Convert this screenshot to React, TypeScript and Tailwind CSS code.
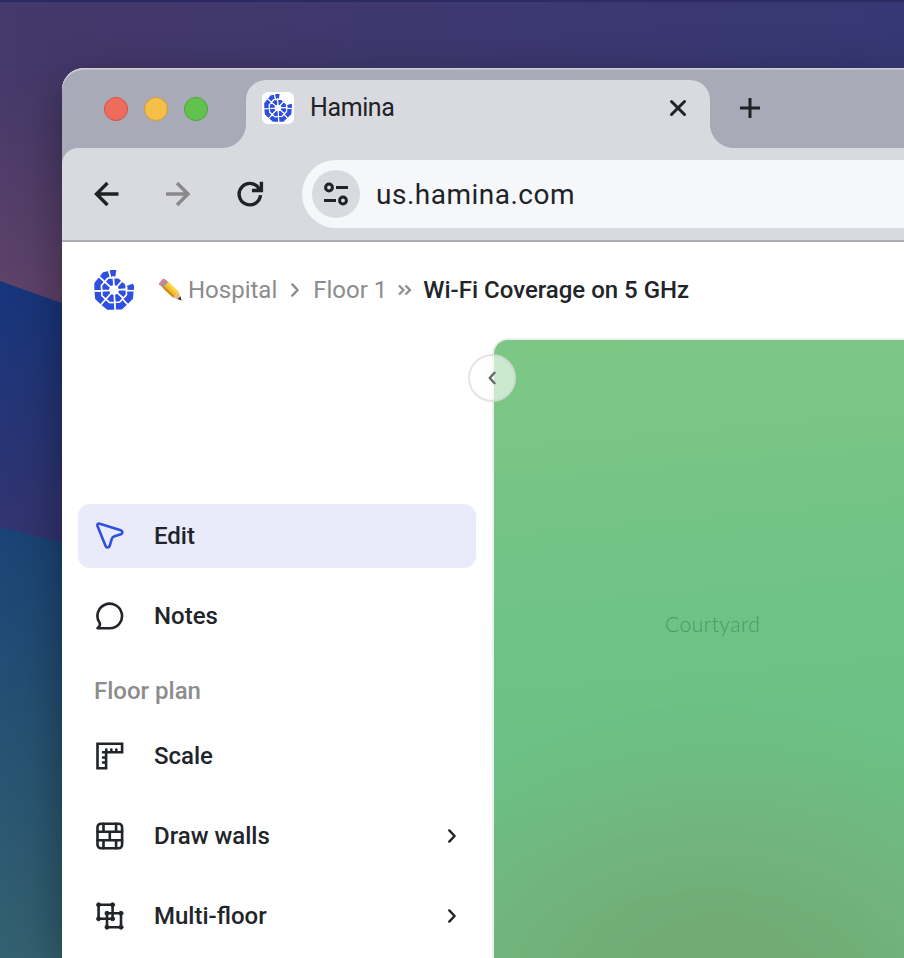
import React from "react";

function polar(r: number, deg: number) {
  const a = ((deg - 90) * Math.PI) / 180;
  return `${(20 + r * Math.cos(a)).toFixed(2)},${(20 + r * Math.sin(a)).toFixed(2)}`;
}

const outerCuts = [69, 92, 137, 177, 222, 267, 312, 345, 369];
const innerCuts = [-3, 42, 87, 132, 177, 222, 267, 312, 357];

function Logo({ size }: { size: number }) {
  return (
    <svg width={size} height={size} viewBox="0 0 40 40" className="shrink-0">
      <g fill="#2f4fe0" stroke="#fff" strokeWidth="1.55">
        {outerCuts.slice(0, -1).map((a, i) => {
          const b = outerCuts[i + 1];
          const mid = (a + b) / 2;
          return <polygon key={a} points={[polar(12.2, a), polar(20.4, a), polar(21.7, mid), polar(20.4, b), polar(12.2, b), polar(13.2, mid)].join(" ")} />;
        })}
        {innerCuts.slice(0, -1).map((a, i) => {
          const b = innerCuts[i + 1];
          const mid = (a + b) / 2;
          return <polygon key={a} points={[polar(4.4, a), polar(12.2, a), polar(13.3, mid), polar(12.2, b), polar(4.4, b)].join(" ")} />;
        })}
      </g>
    </svg>
  );
}

function Pencil() {
  return (
    <svg width="24" height="24" viewBox="0 0 24 24" className="shrink-0">
      <path d="M1 5.200 4.200 1.500Q5.500.300 7 1.300L9.300 3.300 3.500 8.600 1.200 6.700Q.500 6 1 5.200Z" fill="#d98288" />
      <path d="m2.900 8 5.600-5.600 2.600 2.300-5.500 5.800Z" fill="#8f9ca4" />
      <path d="m4.600 9.800 5.900-5.900 10.300 10.200-5.900 5.500Z" fill="#f4bb2c" />
      <path d="m4.600 9.800 1.700-1.700 10.200 9.800-1.600 1.700Z" fill="#cf8a18" />
      <path d="m8.500 5.900 2-2 10.300 10.200-1.900 1.800Z" fill="#fbd549" />
      <path d="m14.900 19.500 5.800-5.400 2.800 8.300Z" fill="#e5bb82" />
      <path d="m19.500 21.100 3-2.700 1.100 4.200Z" fill="#39312f" />
    </svg>
  );
}

function Chevron({ className = "", flip = false }: { className?: string; flip?: boolean }) {
  return (
    <svg width="8" height="14" viewBox="0 0 8 14" className={className} fill="none" stroke="currentColor" strokeWidth="2.4" strokeLinecap="round" strokeLinejoin="round">
      <path d={flip ? "M6.500 1.800 1.700 7l4.800 5.200" : "m1.300 1.400 5.300 5.600-5.300 5.600"} />
    </svg>
  );
}

const icons: Record<string, React.ReactNode> = {
  edit: <path d="M2.700 5.100C2.100 3.200 3.300 2.200 5 2.700l20.900 6.600c2.200.8 2.200 3.200.2 3.900l-6.400 2c-1.500.5-2.300 1.300-2.700 2.700l-2.100 6.900c-.8 2.300-3.400 2.300-4.200 0Z" />,
  notes: <path d="M2.700 27.300H15A12.300 12.300 0 1 0 4.900 22.100Q6 24.600 2.700 27.300Z" />,
  scale: (
    <>
      <path d="M2.700 2.700h24.600v8.600h-16v16H2.700Z" strokeLinejoin="miter" />
      <path d="M11.500 8.500v2M16.500 8.500v2M21.500 8.500v2M8.200 11.300h3M8.200 16.500h2M8.200 21.500h2" />
    </>
  ),
  walls: (
    <>
      <rect x="2.700" y="2.700" width="24.600" height="24.600" rx="3.500" />
      <path d="M2.700 10.800h24.600M2.700 19.200h24.600M8.700 2.700v8.100m12.600-8.100v8.100M15 10.800v8.400M8.700 19.200v8.100m12.600-8.100v8.100" />
    </>
  ),
  floors: (
    <>
      <path d="M3.800 3.800h14v14h-14ZM12.200 12.200h14v14h-14Z" />
      <g fill="currentColor" strokeWidth="1">
        <circle cx="3.800" cy="3.800" r="2" />
        <circle cx="17.800" cy="3.800" r="2" />
        <circle cx="3.800" cy="17.800" r="2" />
        <circle cx="17.800" cy="17.800" r="2" />
        <circle cx="12.200" cy="12.200" r="2" />
        <circle cx="26.200" cy="12.200" r="2" />
        <circle cx="12.200" cy="26.200" r="2" />
        <circle cx="26.200" cy="26.200" r="2" />
      </g>
    </>
  ),
};

function Item({ icon, label, active = false, more = false }: { icon: string; label: string; active?: boolean; more?: boolean }) {
  return (
    <div className={`flex h-16 w-[398px] shrink-0 items-center rounded-xl pr-5 pl-[17px] ${active ? "bg-[#e9ebfb]" : ""}`}>
      <svg width="30" height="30" viewBox="0.2 0 30 30" fill="none" stroke="currentColor" strokeWidth="2.600" strokeLinejoin="round" strokeLinecap="round" className={active ? "text-[#2f4fe0]" : "text-[#212529]"}>
        {icons[icon]}
      </svg>
      <span className="ml-[29px] flex-1 text-2xl font-medium">{label}</span>
      {more && <Chevron />}
    </div>
  );
}

function Wallpaper() {
  return (
    <svg className="absolute inset-0" width="904" height="958" viewBox="0 0 904 958">
      <defs>
        <linearGradient id="top" x1="0" y1="0" x2="1" y2="0">
          <stop offset="0" stopColor="#45386a" />
          <stop offset="1" stopColor="#363875" />
        </linearGradient>
        <linearGradient id="left" x1="0" y1="0" x2="0" y2="1">
          <stop offset="0" stopColor="#5f4468" stopOpacity="0" />
          <stop offset="1" stopColor="#62446a" />
        </linearGradient>
        <linearGradient id="mid" x1="0" y1="0" x2="0" y2="1">
          <stop offset="0" stopColor="#17367d" />
          <stop offset="1" stopColor="#35346f" />
        </linearGradient>
        <linearGradient id="low" x1="0" y1="0" x2="0" y2="1">
          <stop offset="0" stopColor="#1a4476" />
          <stop offset="1" stopColor="#346170" />
        </linearGradient>
      </defs>
      <path d="M0 0h904v315H0Z" fill="url(#top)" />
      <path d="M0 0h904v2H0Z" fill="#2b2a62" />
      <path d="M0 68h90v250H0Z" fill="url(#left)" />
      <path d="M0 281 90 313v240H0Z" fill="url(#mid)" />
      <path d="m0 527 90 22v409H0Z" fill="url(#low)" />
    </svg>
  );
}

function TabStrip() {
  return (
    <div className="flex h-20 shrink-0 rounded-tl-[22px] bg-[#a8aab7] pt-3 shadow-[inset_0_1.500px_0_#cfd0d8]">
      <div className="flex w-[160px] gap-4 pt-[17px] pl-[42px]">
        <i className="size-6 rounded-full border border-[#d5513f] bg-[#ed6c5c]" />
        <i className="size-6 rounded-full border border-[#d69b31] bg-[#f5bf48]" />
        <i className="size-6 rounded-full border border-[#4ba739] bg-[#61c34e]" />
      </div>
      <div className="size-6 self-end bg-[radial-gradient(circle_at_0_0,transparent_23.5px,#d9dadf_24.5px)]" />
      <div className="flex w-[464px] items-start rounded-t-[20px] bg-[#d9dadf] pt-3 pr-[22px] pl-4">
        <div className="flex size-8 items-center justify-center rounded-md bg-white">
          <Logo size={28} />
        </div>
        <span className="ml-4 flex-1 text-[25px] leading-[32px] tracking-[-0.4px] text-[#212226]">Hamina</span>
        <svg width="20" height="32" viewBox="0 0 20 32" stroke="#202226" strokeWidth="3" strokeLinecap="round">
          <path d="m3.500 9.500 13 13M16.500 9.500l-13 13" />
        </svg>
      </div>
      <div className="size-6 self-end bg-[radial-gradient(circle_at_100%_0,transparent_23.5px,#d9dadf_24.5px)]" />
      <svg className="mt-[18px] ml-[5px]" width="22" height="22" viewBox="0 0 22 22" stroke="#202226" strokeWidth="3">
        <path d="M11 0v20M1 10h20" />
      </svg>
    </div>
  );
}

function Toolbar() {
  return (
    <div className="bg-[#a8aab7]">
      <div className="flex h-[94px] items-start rounded-tl-2xl border-b-2 border-[#adadb3] bg-[#d9dadf] pt-3">
        <svg width="240" height="68" viewBox="62 160 240 68" fill="none" stroke="#202226" strokeWidth="3.400">
          <path d="M118.500 194H96.500M107.500 183 96.500 194l11 11" />
          <path d="M166 194h22M177 183 188 194l-11 11" stroke="#89898d" />
          <path d="M260.500 195.200A10.700 10.700 0 1 1 259.500 189.500" />
          <path d="M252 190.500h9.400v-8.700" />
        </svg>
        <div className="flex h-[68px] flex-1 items-center rounded-l-full bg-[#f6f7fa] pl-[10px]">
          <div className="flex size-12 items-center justify-center rounded-full bg-[#d9dadf]">
            <svg width="26" height="26" viewBox="0 0 26 26" fill="none" stroke="#202226" strokeWidth="3">
              <circle cx="6" cy="6.500" r="3.400" />
              <path d="M13 6.500h12M1 19.500h12" />
              <circle cx="20" cy="19.500" r="3.400" />
            </svg>
          </div>
          <span className="relative top-px ml-4 text-[28px] tracking-[0.500px] text-[#202226]">us.hamina.com</span>
        </div>
      </div>
    </div>
  );
}

function Breadcrumbs() {
  return (
    <header className="flex h-24 shrink-0 items-center pl-8 text-2xl text-[#8c8c8c]">
      <Logo size={40} />
      <div className="ml-6 flex items-center">
        <Pencil />
        <span className="ml-[6px]">Hospital</span>
        <Chevron className="mx-[14px]" />
        <span>Floor 1</span>
        <svg className="mr-[11px] ml-[11px]" width="14" height="12" viewBox="0 0 14 12" fill="none" stroke="currentColor" strokeWidth="2.200">
          <path d="m1 1.500 4.500 4.500L1 10.500M7.500 1.500 12 6l-4.500 4.500" />
        </svg>
        <span className="font-medium text-[#212529]">Wi-Fi Coverage on 5 GHz</span>
      </div>
    </header>
  );
}

const bands = [
  [330, 285],
  [300, 238],
  [270, 200],
  [235, 165],
  [200, 130],
  [165, 100],
];

function Coverage() {
  return (
    <main className="relative flex-1">
      <div className="relative h-full overflow-hidden rounded-tl-2xl border-t-2 border-l-2 border-[#eeeeef] bg-[linear-gradient(175deg,#7cc784_0%,#7ac686_15%,#72c386_35%,#6dc286_52%,#6cbf85_75%,#6fbc82_100%)]">
        <svg className="absolute inset-0" width="410" height="618" viewBox="0 0 410 618">
          <defs>
            <radialGradient id="warm">
              <stop offset="0" stopColor="#7aae78" />
              <stop offset=".25" stopColor="#78b07a" stopOpacity=".85" />
              <stop offset=".6" stopColor="#75b47d" stopOpacity=".5" />
              <stop offset="1" stopColor="#70bb82" stopOpacity="0" />
            </radialGradient>
          </defs>
          <ellipse cx="225" cy="650" rx="380" ry="290" fill="url(#warm)" />
          {bands.map(([rx, ry]) => (
            <ellipse key={rx} cx="215" cy="650" rx={rx} ry={ry} fill="#7bb277" opacity=".035" />
          ))}
        </svg>
        <p className="relative mt-[270px] ml-[171px] font-[Lato] text-[21px] leading-[28px] font-light tracking-[0.5px] text-[#479b64]">Courtyard</p>
      </div>
      <button className="absolute top-[16px] left-[-24px] flex size-12 items-center justify-center rounded-full border-2 border-[#cccccc]/50 bg-white/60 text-[#666]">
        <Chevron flip />
      </button>
    </main>
  );
}

export default function App() {
  return (
    <div className="relative h-[958px] w-[904px] overflow-hidden bg-[#453768] font-[Roboto,sans-serif] text-[#212529]">
      <Wallpaper />
      <div className="relative flex h-full flex-col pt-[68px] pl-[62px]">
        <div className="flex flex-1 flex-col rounded-tl-[22px] bg-white shadow-[0_16px_50px_#0006]">
          <TabStrip />
          <Toolbar />
          <Breadcrumbs />
          <div className="flex flex-1">
            <nav className="flex w-[430px] shrink-0 flex-col pt-[166px] pl-4">
              <Item icon="edit" label="Edit" active />
              <div className="h-4" />
              <Item icon="notes" label="Notes" />
              <h2 className="mt-6 mb-[14px] ml-4 text-2xl leading-[38px] font-medium text-[#8c8c8c]">Floor plan</h2>
              <Item icon="scale" label="Scale" />
              <div className="h-4" />
              <Item icon="walls" label="Draw walls" more />
              <div className="h-4" />
              <Item icon="floors" label="Multi-floor" more />
            </nav>
            <Coverage />
          </div>
        </div>
      </div>
    </div>
  );
}
